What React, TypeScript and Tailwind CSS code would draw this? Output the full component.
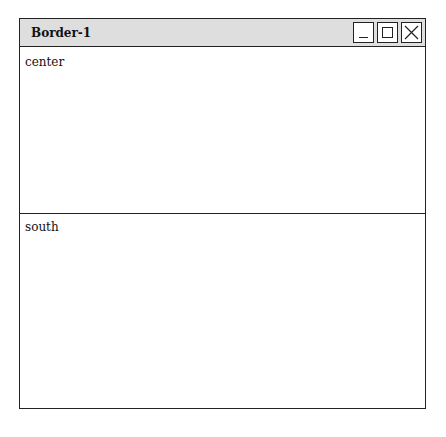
import React from "react";

function WinButton({ children }: { children: React.ReactNode }) {
  return (
    <div className="w-[21px] h-[21px] border border-[#222] bg-white flex items-center justify-center">
      {children}
    </div>
  );
}

export default function App() {
  return (
    <div className="w-[446px] h-[437px] bg-white pt-[18px] pl-[19px] font-['DejaVu_Serif',serif] text-[#111]">
      <div className="w-[407px] h-[391px] border border-[#222] flex flex-col">
        <div className="h-[28px] bg-[#dedede] border-b border-[#222] flex items-center pl-[11px] pr-[3px]">
          <span className="text-[12px] font-bold flex-1">Border-1</span>
          <div className="flex gap-[3px]">
            <WinButton>
              <div className="w-[9px] h-[1px] bg-[#222] mt-[10px]" />
            </WinButton>
            <WinButton>
              <div className="w-[11px] h-[11px] border border-[#222]" />
            </WinButton>
            <WinButton>
              <svg width="15" height="15" viewBox="0 0 15 15" stroke="#222" strokeWidth="1.2">
                <path d="M1 1L14 14M14 1L1 14" />
              </svg>
            </WinButton>
          </div>
        </div>
        <div className="h-[167px] border-b border-[#222] px-[5px] pt-[8px] text-[12px] leading-[15px]">
          center
        </div>
        <div className="flex-1 px-[5px] pt-[6px] text-[12px] leading-[15px]">south</div>
      </div>
    </div>
  );
}
